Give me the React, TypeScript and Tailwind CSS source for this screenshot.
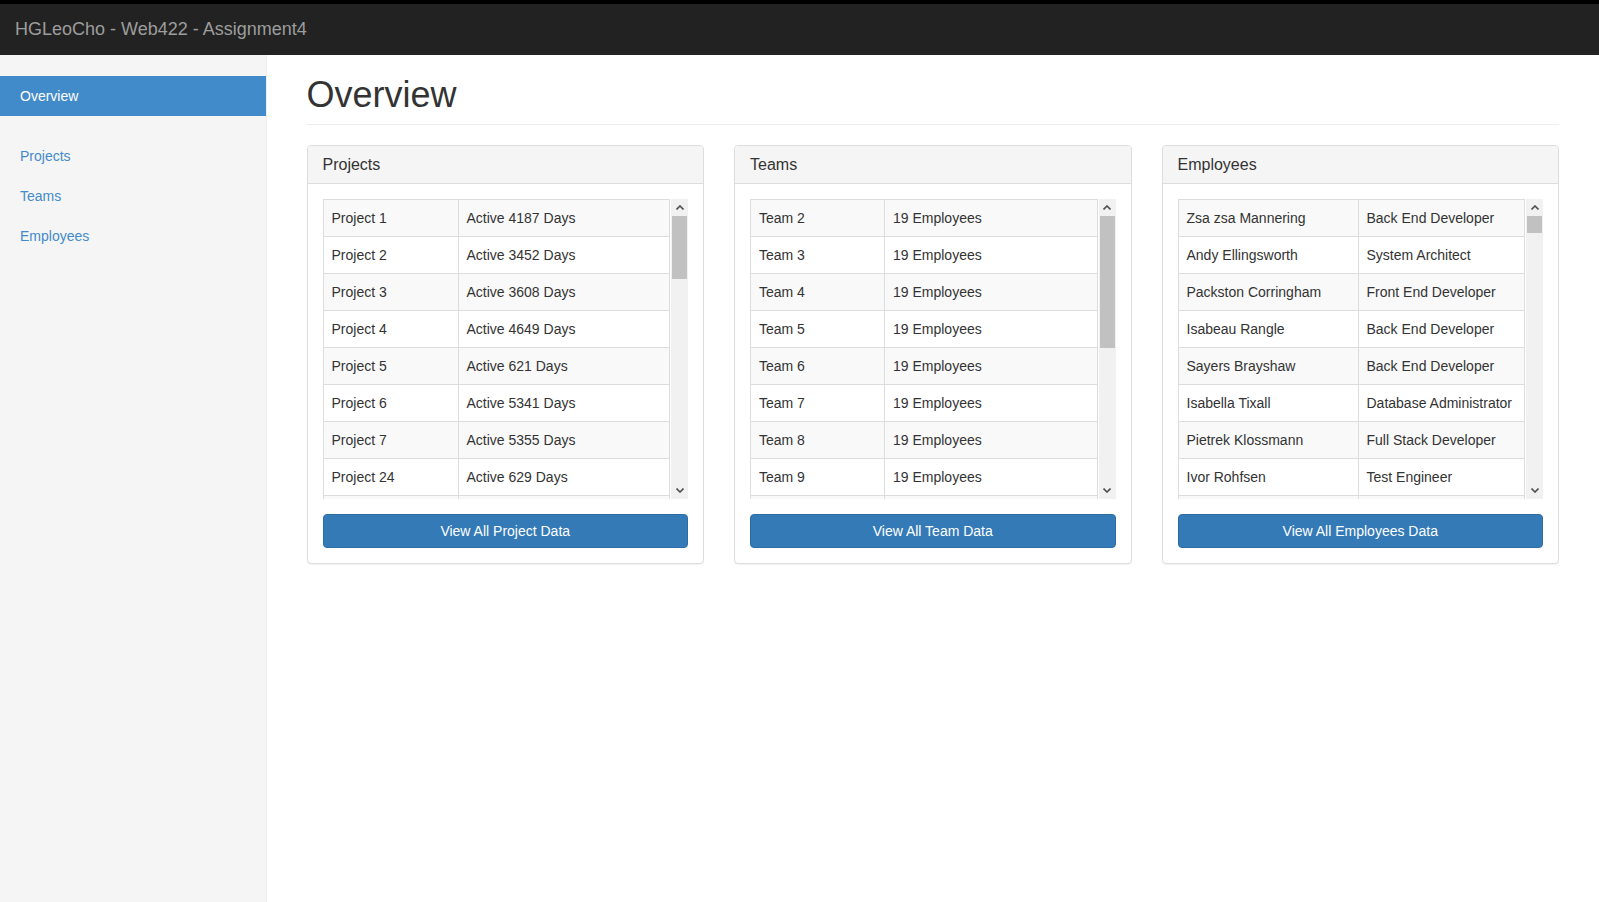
import React from 'react'

type Row = [string, string]

const PROJECT_DAYS = [4187, 3452, 3608, 4649, 621, 5341, 5355, 629]
const PROJECT_IDS = [1, 2, 3, 4, 5, 6, 7, 24]

const projects: Row[] = [
  ...PROJECT_IDS.map((id, i): Row => [`Project ${id}`, `Active ${PROJECT_DAYS[i]} Days`]),
  ...Array.from({ length: 27 }, (_, i): Row => [
    `Project ${i + 8 + (i >= 16 ? 1 : 0)}`,
    `Active ${((i * 1873 + 911) % 5200) + 300} Days`,
  ]),
]

const teams: Row[] = Array.from({ length: 16 }, (_, i): Row => [
  `Team ${i + 2}`,
  `${i < 8 ? 19 : 18 + (i % 3)} Employees`,
])

const FIXED_EMPLOYEES: Row[] = [
  ['Zsa zsa Mannering', 'Back End Developer'],
  ['Andy Ellingsworth', 'System Architect'],
  ['Packston Corringham', 'Front End Developer'],
  ['Isabeau Rangle', 'Back End Developer'],
  ['Sayers Brayshaw', 'Back End Developer'],
  ['Isabella Tixall', 'Database Administrator'],
  ['Pietrek Klossmann', 'Full Stack Developer'],
  ['Ivor Rohfsen', 'Test Engineer'],
]

const FIRST = ['Margit', 'Dorian', 'Lindy', 'Cal', 'Ardelis', 'Benny', 'Hedi', 'Osbert', 'Tove', 'Gaspar', 'Myrle', 'Ruperto']
const LAST = ['Ablett', 'Gorries', 'Kemmey', 'Pountain', 'Sillito', 'Dowsey', 'Heningam', 'Vedeniktov', 'Lesurf', 'Cottier', 'Brackenridge']
const ROLES = ['Back End Developer', 'Front End Developer', 'Full Stack Developer', 'Test Engineer', 'System Architect', 'Database Administrator', 'Project Manager']

const employees: Row[] = [
  ...FIXED_EMPLOYEES,
  ...Array.from({ length: 140 }, (_, i): Row => [
    `${FIRST[i % FIRST.length]} ${LAST[(i * 7 + 3) % LAST.length]}`,
    ROLES[(i * 5 + 2) % ROLES.length],
  ]),
]

// scrollbar arrow, drawn like the classic Windows chevron
function Chevron({ up }: { up?: boolean }) {
  return (
    <svg width="8" height="5" viewBox="0 0 8 5" className="text-[#505050]">
      <polyline
        points={up ? '0.5,4.5 4,1 7.5,4.5' : '0.5,0.5 4,4 7.5,0.5'}
        fill="none"
        stroke="currentColor"
        strokeWidth="1.6"
      />
    </svg>
  )
}

function DataPanel({ title, rows, button, firstCol, thumb }: { title: string; rows: Row[]; button: string; firstCol: string; thumb: string }) {
  return (
    <div className="bg-white border border-[#ddd] rounded-[4px] shadow-[0_1px_1px_rgba(0,0,0,0.05)]">
      <div className="bg-[#f5f5f5] border-b border-[#ddd] rounded-t-[3px] px-[15px] py-[10px]">
        <h3 className="text-[16px] leading-[1.1] text-[#333]">{title}</h3>
      </div>
      <div className="p-[15px]">
        <div className="flex h-[300px]">
          <div className="flex-1 min-w-0 overflow-hidden">
            <table className="w-full border-collapse border border-[#ddd]">
              <colgroup>
                <col className={firstCol} />
                <col />
              </colgroup>
              <tbody>
                {rows.map((r, i) => (
                  <tr key={i} className={i % 2 === 0 ? 'bg-[#f9f9f9]' : 'bg-white'}>
                    <td className="border border-[#ddd] p-[8px] leading-[20px] whitespace-nowrap">{r[0]}</td>
                    <td className="border border-[#ddd] p-[8px] leading-[20px] whitespace-nowrap">{r[1]}</td>
                  </tr>
                ))}
              </tbody>
            </table>
          </div>
          <div className="w-[17px] shrink-0 ml-[1px] bg-[#f1f1f1] flex flex-col">
            <div className="h-[17px] flex items-center justify-center">
              <Chevron up />
            </div>
            <div className={`${thumb} mx-[1px] bg-[#c1c1c1]`} />
            <div className="flex-1" />
            <div className="h-[17px] flex items-center justify-center">
              <Chevron />
            </div>
          </div>
        </div>
        <button className="mt-[15px] w-full h-[34px] bg-[#337ab7] border border-[#2e6da4] rounded-[4px] text-white text-[14px] leading-[20px]">
          {button}
        </button>
      </div>
    </div>
  )
}

export default function App() {
  return (
    <div className="min-h-screen bg-white text-[14px] text-[#333] font-['Liberation_Sans',Arial,sans-serif]">
      <div className="h-[4px] bg-black" />
      <header className="h-[51px] bg-[#222] flex items-center px-[15px]">
        <span className="text-[18px] text-[#9d9d9d]">HGLeoCho - Web422 - Assignment4</span>
      </header>
      <div className="flex min-h-[847px]">
        <aside className="w-[266.5px] shrink-0 bg-[#f5f5f5] border-r border-[#eee] pt-[21px]">
          <ul>
            <li className="h-[40px] px-[20px] flex items-center bg-[#428bca] text-white">Overview</li>
          </ul>
          <ul className="mt-[20px]">
            {['Projects', 'Teams', 'Employees'].map((l) => (
              <li key={l} className="h-[40px] px-[20px] flex items-center text-[#428bca]">
                {l}
              </li>
            ))}
          </ul>
        </aside>
        <main className="flex-1 min-w-0 px-[40px] pt-[20px]">
          <h1 className="text-[36px] leading-[1.1] font-medium pb-[9px] border-b border-[#eee] text-[#333]">Overview</h1>
          <div className="grid grid-cols-3 gap-[30px] mt-[20px]">
            <DataPanel title="Projects" rows={projects} button="View All Project Data" firstCol="w-[135px]" thumb="h-[63px]" />
            <DataPanel title="Teams" rows={teams} button="View All Team Data" firstCol="w-[134px]" thumb="h-[132px]" />
            <DataPanel title="Employees" rows={employees} button="View All Employees Data" firstCol="w-[180px]" thumb="h-[17px]" />
          </div>
        </main>
      </div>
    </div>
  )
}
